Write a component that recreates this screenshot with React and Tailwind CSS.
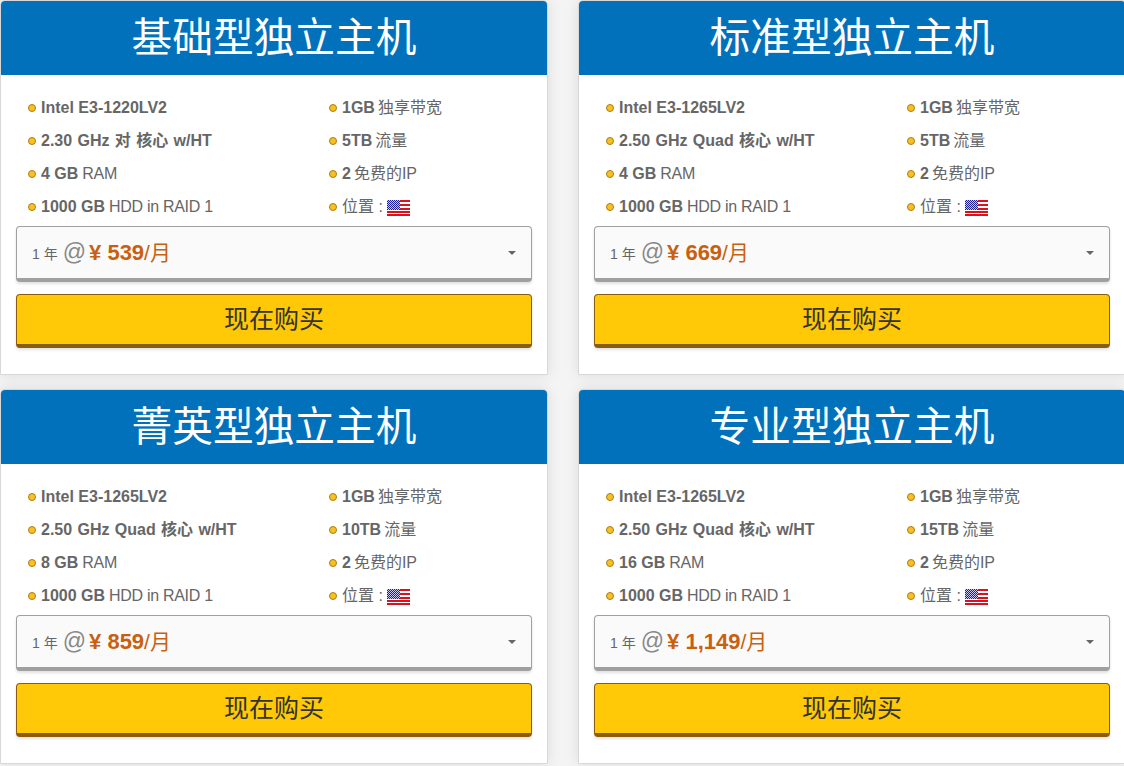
const sans = 'font-["Liberation_Sans","Noto_Sans_CJK_SC",sans-serif]'

const plans = [
  { title: '基础型独立主机', cpu: 'Intel E3-1220LV2', speed: '2.30 GHz 对 核心 w/HT', ram: '4 GB', traffic: '5TB', price: '¥ 539' },
  { title: '标准型独立主机', cpu: 'Intel E3-1265LV2', speed: '2.50 GHz Quad 核心 w/HT', ram: '4 GB', traffic: '5TB', price: '¥ 669' },
  { title: '菁英型独立主机', cpu: 'Intel E3-1265LV2', speed: '2.50 GHz Quad 核心 w/HT', ram: '8 GB', traffic: '10TB', price: '¥ 859' },
  { title: '专业型独立主机', cpu: 'Intel E3-1265LV2', speed: '2.50 GHz Quad 核心 w/HT', ram: '16 GB', traffic: '15TB', price: '¥ 1,149' },
]

function Flag() {
  return (
    <svg width="23" height="16" viewBox="0 0 23 16" shapeRendering="crispEdges" className="mt-[2px]">
      <defs>
        <pattern id="stars" width="2" height="2" patternUnits="userSpaceOnUse">
          <rect width="2" height="2" fill="#1c1c9c" />
          <rect width="1" height="1" fill="#c8c8f0" />
          <rect x="1" y="1" width="1" height="1" fill="#c8c8f0" />
        </pattern>
      </defs>
      <rect width="23" height="16" fill="#fff" />
      <rect y="0" width="23" height="2" fill="#d8121f" />
      <rect y="4" width="23" height="2" fill="#d8121f" />
      <rect y="8" width="23" height="2" fill="#d8121f" />
      <rect y="11" width="23" height="2" fill="#d8121f" />
      <rect y="14" width="23" height="2" fill="#d8121f" />
      <rect width="13" height="10" fill="url(#stars)" />
    </svg>
  )
}

function Item({ children }) {
  return (
    <li className="flex items-center h-[33px] text-[16px] text-[#666]">
      <span className="w-[8px] h-[8px] mr-[5px] rounded-full bg-[#fbbf24] border border-[#a87f10] shrink-0" />
      <span className="flex items-center whitespace-pre">{children}</span>
    </li>
  )
}

function Card({ plan }) {
  return (
    <div className="bg-white border border-[#d8d8d8] rounded-t-[5px] h-[375px] shadow-[0_0_14px_rgba(0,0,0,0.1)]">
      <h2 className={`bg-[#0271bc] text-white text-center h-[74px] leading-[74px] text-[40.7px] rounded-t-[4px] ${sans}`}>
        {plan.title}
      </h2>
      <div className="px-[15px] pt-[16px]">
        <div className="grid grid-cols-[301px_1fr] pl-[12px]">
          <ul>
            <Item><b>{plan.cpu}</b></Item>
            <Item><b className="[word-spacing:0.9px]">{plan.speed}</b></Item>
            <Item><b>{plan.ram}</b><span className="ml-[4px] tracking-[-0.3px]">RAM</span></Item>
            <Item><b>1000 GB</b><span className="ml-[4px] tracking-[-0.3px]">HDD in RAID 1</span></Item>
          </ul>
          <ul>
            <Item><b>1GB</b><span className="ml-[3px]">独享带宽</span></Item>
            <Item><b>{plan.traffic}</b><span className="ml-[3px]">流量</span></Item>
            <Item><b>2</b><span className="ml-[3px]">免费的IP</span></Item>
            <Item>位置 : <Flag /></Item>
          </ul>
        </div>
        <div className="flex items-center h-[56px] mt-[3px] px-[15px] bg-[#fafafa] border border-[#a0a0a0] border-b-[4px] rounded-[4px] shadow-[0_2px_3px_rgba(0,0,0,0.12)]">
          <span className="text-[14px] text-[#666] mt-[3px]">1 年</span>
          <span className="text-[23px] text-[#888] ml-[5px]">@</span>
          <b className="text-[22px] text-[#c8600f] ml-[3px]">{plan.price}</b>
          <span className="text-[21px] text-[#c8600f]">/月</span>
          <span className="ml-auto border-x-[4px] border-x-transparent border-t-[4px] border-t-[#666]" />
        </div>
        <button className={`block w-full h-[54px] mt-[12px] bg-[#ffc907] border border-[#8a5c10] border-b-[4px] rounded-[4px] text-[25px] text-[#333] shadow-[0_2px_3px_rgba(0,0,0,0.12)] ${sans}`}>
          现在购买
        </button>
      </div>
    </div>
  )
}

export default function App() {
  return (
    <div className={`h-[766px] w-[1124px] overflow-hidden bg-[#f4f4f4] ${sans}`}>
      <div className="grid grid-cols-[548px_548px] gap-x-[30px] gap-y-[14px] w-[1126px]">
        {plans.map(p => <Card key={p.title} plan={p} />)}
      </div>
    </div>
  )
}
